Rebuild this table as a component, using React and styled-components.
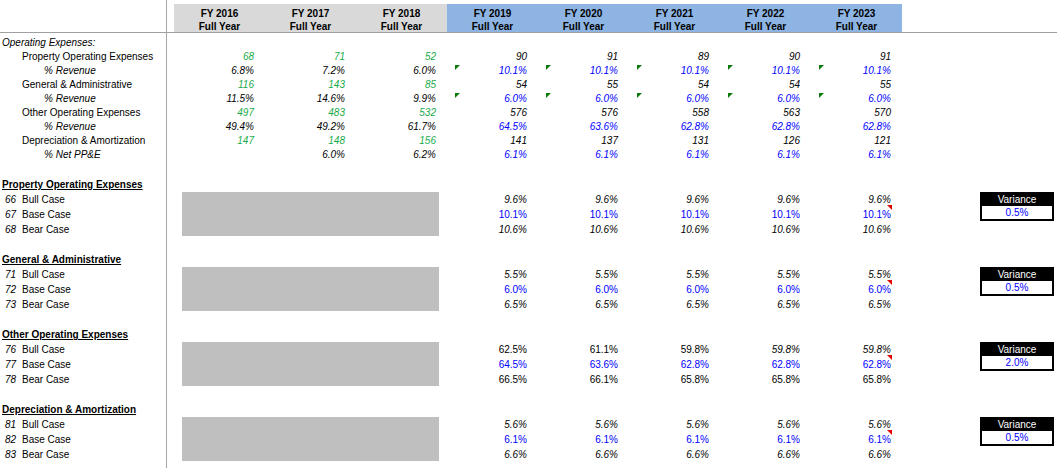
import styled, { createGlobalStyle } from "styled-components";

const COLS = "174px repeat(8, 91px) 1fr";

const YEARS = ["2016", "2017", "2018", "2019", "2020", "2021", "2022", "2023"];

const TOP_ROWS = [
  { label: "Operating Expenses:", indent: 0, italic: true },
  {
    label: "Property Operating Expenses",
    indent: 1,
    hist: ["68", "71", "52"],
    proj: ["90", "91", "89", "90", "91"],
  },
  {
    label: "% Revenue",
    indent: 2,
    italic: true,
    pct: true,
    flag: true,
    hist: ["6.8%", "7.2%", "6.0%"],
    proj: ["10.1%", "10.1%", "10.1%", "10.1%", "10.1%"],
  },
  {
    label: "General & Administrative",
    indent: 1,
    hist: ["116", "143", "85"],
    proj: ["54", "55", "54", "54", "55"],
  },
  {
    label: "% Revenue",
    indent: 2,
    italic: true,
    pct: true,
    flag: true,
    hist: ["11.5%", "14.6%", "9.9%"],
    proj: ["6.0%", "6.0%", "6.0%", "6.0%", "6.0%"],
  },
  {
    label: "Other Operating Expenses",
    indent: 1,
    hist: ["497", "483", "532"],
    proj: ["576", "576", "558", "563", "570"],
  },
  {
    label: "% Revenue",
    indent: 2,
    italic: true,
    pct: true,
    hist: ["49.4%", "49.2%", "61.7%"],
    proj: ["64.5%", "63.6%", "62.8%", "62.8%", "62.8%"],
  },
  {
    label: "Depreciation & Amortization",
    indent: 1,
    hist: ["147", "148", "156"],
    proj: ["141", "137", "131", "126", "121"],
  },
  {
    label: "% Net PP&E",
    indent: 2,
    italic: true,
    pct: true,
    hist: ["", "6.0%", "6.2%"],
    proj: ["6.1%", "6.1%", "6.1%", "6.1%", "6.1%"],
  },
];

const CASES = [
  {
    title: "Property Operating Expenses",
    start: 66,
    bull: ["9.6%", "9.6%", "9.6%", "9.6%", "9.6%"],
    base: ["10.1%", "10.1%", "10.1%", "10.1%", "10.1%"],
    bear: ["10.6%", "10.6%", "10.6%", "10.6%", "10.6%"],
    variance: "0.5%",
  },
  {
    title: "General & Administrative",
    start: 71,
    bull: ["5.5%", "5.5%", "5.5%", "5.5%", "5.5%"],
    base: ["6.0%", "6.0%", "6.0%", "6.0%", "6.0%"],
    bear: ["6.5%", "6.5%", "6.5%", "6.5%", "6.5%"],
    variance: "0.5%",
  },
  {
    title: "Other Operating Expenses",
    start: 76,
    bull: ["62.5%", "61.1%", "59.8%", "59.8%", "59.8%"],
    base: ["64.5%", "63.6%", "62.8%", "62.8%", "62.8%"],
    bear: ["66.5%", "66.1%", "65.8%", "65.8%", "65.8%"],
    variance: "2.0%",
    uprightBull: 3,
    uprightBear: 5,
  },
  {
    title: "Depreciation & Amortization",
    start: 81,
    bull: ["5.6%", "5.6%", "5.6%", "5.6%", "5.6%"],
    base: ["6.1%", "6.1%", "6.1%", "6.1%", "6.1%"],
    bear: ["6.6%", "6.6%", "6.6%", "6.6%", "6.6%"],
    variance: "0.5%",
  },
];

const App = () => {
  return (
    <>
      <GlobalStyle />
      <Sheet>
        <HeaderRow>
          <span />
          {YEARS.map((y, i) => (
            <HeadCell key={y} $proj={i >= 3}>
              <div>FY {y}</div>
              <div>Full Year</div>
            </HeadCell>
          ))}
        </HeaderRow>

        <TopSection>
          {TOP_ROWS.map((row, r) => (
            <DataRow key={r}>
              <Label $indent={row.indent} $italic={row.italic}>
                {row.label}
              </Label>
              {(row.hist || []).map((v, i) => (
                <Cell key={"h" + i} $color={row.pct ? "#000" : "#1aab4b"}>
                  {v}
                </Cell>
              ))}
              {(row.proj || []).map((v, i) => (
                <Cell key={"p" + i} $color={row.pct ? "#0000ff" : "#000"}>
                  {row.flag && <GreenFlag />}
                  {v}
                </Cell>
              ))}
            </DataRow>
          ))}
        </TopSection>

        {CASES.map((c) => (
          <CaseBlock key={c.title}>
            <CaseTitle>{c.title}</CaseTitle>
            <GrayBox />
            <Variance>
              <VarianceHead>Variance</VarianceHead>
              <VarianceValue>{c.variance}</VarianceValue>
            </Variance>
            {["Bull Case", "Base Case", "Bear Case"].map((name, k) => {
              const vals = k === 0 ? c.bull : k === 1 ? c.base : c.bear;
              const upright =
                k === 1 ? 5 : k === 0 ? c.uprightBull || 0 : c.uprightBear || 0;
              return [
                <CaseLabel key={name}>
                  <RowNum>{c.start + k}</RowNum>
                  {name}
                </CaseLabel>,
                ...vals.map((v, i) => (
                  <Cell
                    key={name + i}
                    $color={k === 1 ? "#0000ff" : "#000"}
                    $upright={i < upright}
                  >
                    {k === 1 && i === 4 && <RedFlag />}
                    {v}
                  </Cell>
                )),
              ];
            })}
          </CaseBlock>
        ))}
      </Sheet>
    </>
  );
};

const GlobalStyle = createGlobalStyle`
  body {
    margin: 0;
    background: #fff;
    color: #000;
    font-family: "Liberation Sans", Arial, sans-serif;
    font-size: 10px;
  }
`;

const Sheet = styled.div`
  min-height: 468px;
  box-sizing: border-box;
  padding-top: 4px;
  background: linear-gradient(#a6a6a6, #a6a6a6) 166px 0 / 1px 100% no-repeat;
  overflow: hidden;
`;

const HeaderRow = styled.div`
  display: grid;
  grid-template-columns: ${COLS};
  border-bottom: 1px solid #a0a0a0;
`;

const HeadCell = styled.div`
  height: 28px;
  box-sizing: border-box;
  padding-top: 3px;
  background: ${(p) => (p.$proj ? "#8db4e2" : "#d9d9d9")};
  font-weight: bold;
  text-align: center;
  line-height: 13px;
`;

const TopSection = styled.div`
  padding-top: 3px;
`;

const DataRow = styled.div`
  display: grid;
  grid-template-columns: ${COLS};
  height: 14px;
  line-height: 14px;
`;

const Label = styled.div`
  padding-left: ${(p) => [2, 22, 44][p.$indent]}px;
  font-style: ${(p) => (p.$italic ? "italic" : "normal")};
  white-space: nowrap;
`;

const Cell = styled.div`
  position: relative;
  padding-right: 11px;
  text-align: right;
  color: ${(p) => p.$color};
  font-style: ${(p) => (p.$upright ? "normal" : "italic")};
  white-space: nowrap;
`;

const GreenFlag = styled.span`
  position: absolute;
  left: 8px;
  top: 1px;
  width: 0;
  height: 0;
  border-top: 5px solid #0a7a0a;
  border-right: 5px solid transparent;
`;

const RedFlag = styled.span`
  position: absolute;
  right: 10px;
  top: -2px;
  width: 0;
  height: 0;
  border-top: 5px solid #e00000;
  border-left: 5px solid transparent;
`;

const CaseBlock = styled.div`
  display: grid;
  grid-template-columns: ${COLS};
  grid-auto-rows: 15px;
  line-height: 15px;
  margin-top: 15px;
`;

const CaseTitle = styled.div`
  grid-column: 1 / -1;
  padding-left: 2px;
  font-weight: bold;
  text-decoration: underline;
`;

const CaseLabel = styled.div`
  display: flex;
  white-space: nowrap;
`;

const RowNum = styled.span`
  flex: 0 0 22px;
  padding-left: 5px;
  box-sizing: border-box;
  font-style: italic;
`;

const GrayBox = styled.div`
  grid-column: 2 / span 3;
  grid-row: 2 / span 3;
  margin: 0 8px 1px;
  background: #bfbfbf;
`;

const Variance = styled.div`
  grid-column: 10;
  grid-row: 2 / span 2;
  align-self: start;
  margin-left: 78px;
  width: 70px;
  border: 2px solid #000;
  text-align: center;
`;

const VarianceHead = styled.div`
  height: 12px;
  line-height: 12px;
  background: #000;
  color: #fff;
`;

const VarianceValue = styled.div`
  height: 13px;
  line-height: 13px;
  background: #fff;
  color: #0000ff;
`;

export default App;
